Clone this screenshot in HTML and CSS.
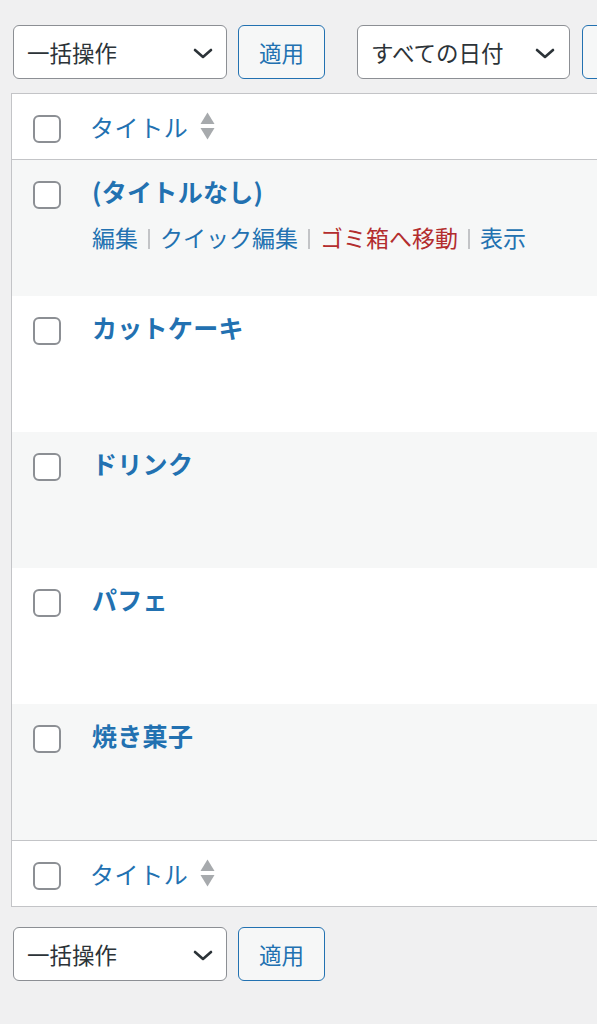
FILE: index.html
```html
<!DOCTYPE html>
<html lang="ja">
<head>
<meta charset="utf-8">
<title>投稿一覧</title>
<link rel="stylesheet" href="styles.css">
</head>
<body>
<div class="page">
  <div class="tablenav top">
    <div class="select bulk">
      <span class="select-label">一括操作</span>
      <svg class="chev" viewBox="0 0 20 11" width="20" height="11"><path d="M2 2 L10 9 L18 2" fill="none" stroke="#2c3338" stroke-width="2.6" stroke-linecap="round" stroke-linejoin="round"/></svg>
    </div>
    <button class="btn">適用</button>
    <div class="select date">
      <span class="select-label">すべての日付</span>
      <svg class="chev" viewBox="0 0 20 11" width="20" height="11"><path d="M2 2 L10 9 L18 2" fill="none" stroke="#2c3338" stroke-width="2.6" stroke-linecap="round" stroke-linejoin="round"/></svg>
    </div>
    <button class="btn narrow">絞り込み</button>
  </div>

  <div class="list">
    <div class="list-head">
      <span class="cb"></span>
      <a class="sort-label">タイトル<svg class="sort" viewBox="0 0 15 28" width="15" height="28"><path d="M7.5 0.5 L14.5 12 L0.5 12 Z" fill="#a7aaad"/><path d="M0.5 16 L14.5 16 L7.5 27.5 Z" fill="#a7aaad"/></svg></a>
    </div>

    <div class="row alt">
      <span class="cb"></span>
      <div class="cell">
        <a class="row-title">(タイトルなし)</a>
        <div class="row-actions">
          <a class="act">編集</a><span class="sep"></span><a class="act">クイック編集</a><span class="sep"></span><a class="act trash">ゴミ箱へ移動</a><span class="sep"></span><a class="act">表示</a>
        </div>
      </div>
    </div>
    <div class="row">
      <span class="cb"></span>
      <div class="cell"><a class="row-title">カットケーキ</a></div>
    </div>
    <div class="row alt">
      <span class="cb"></span>
      <div class="cell"><a class="row-title">ドリンク</a></div>
    </div>
    <div class="row">
      <span class="cb"></span>
      <div class="cell"><a class="row-title">パフェ</a></div>
    </div>
    <div class="row alt">
      <span class="cb"></span>
      <div class="cell"><a class="row-title">焼き菓子</a></div>
    </div>

    <div class="list-foot">
      <span class="cb"></span>
      <a class="sort-label">タイトル<svg class="sort" viewBox="0 0 15 28" width="15" height="28"><path d="M7.5 0.5 L14.5 12 L0.5 12 Z" fill="#a7aaad"/><path d="M0.5 16 L14.5 16 L7.5 27.5 Z" fill="#a7aaad"/></svg></a>
    </div>
  </div>

  <div class="tablenav bottom">
    <div class="select bulk">
      <span class="select-label">一括操作</span>
      <svg class="chev" viewBox="0 0 20 11" width="20" height="11"><path d="M2 2 L10 9 L18 2" fill="none" stroke="#2c3338" stroke-width="2.6" stroke-linecap="round" stroke-linejoin="round"/></svg>
    </div>
    <button class="btn">適用</button>
  </div>
</div>
</body>
</html>
```

FILE: styles.css
```css
html, body {
  margin: 0;
  padding: 0;
  background: #f0f0f1;
  overflow: hidden;
}
body {
  font-family: "Noto Sans CJK JP", "Noto Sans", sans-serif;
  color: #2c3338;
  width: 597px;
  height: 1024px;
}
.page {
  padding: 25px 0 0 11px;
  width: 700px;
}
.tablenav {
  display: flex;
  align-items: flex-start;
  padding-left: 2px;
}
.tablenav.bottom {
  margin-top: 20px;
}
.select {
  box-sizing: border-box;
  flex: none;
  height: 54px;
  background: #fff;
  border: 1.5px solid #8c8f94;
  border-radius: 6px;
  display: flex;
  align-items: center;
  justify-content: space-between;
  padding: 0 13px 0 13px;
  font-size: 22.5px;
  color: #2c3338;
}
.select.bulk { width: 214px; }
.select.date { width: 213px; margin-left: 32px; padding-right: 14px; }
.select-label { line-height: 1; white-space: nowrap; }
.chev { display: block; flex: none; margin-top: 2px; }
.btn {
  box-sizing: border-box;
  flex: none;
  width: 87px;
  height: 54px;
  margin-left: 11px;
  padding: 0;
  text-align: center;
  background: #f6f7f7;
  border: 1.5px solid #2271b1;
  border-radius: 6px;
  color: #2271b1;
  font-family: inherit;
  font-size: 22.5px;
  line-height: 1;
  white-space: nowrap;
}
.btn.narrow { width: 120px; margin-left: 12px; }

.list {
  margin-top: 14px;
  width: 640px;
  background: #fff;
  border: 1px solid #c3c4c7;
}
.cb {
  box-sizing: border-box;
  flex: none;
  width: 28px;
  height: 28px;
  border: 2px solid #8c8f94;
  border-radius: 6px;
  background: #fff;
}
.list-head, .list-foot {
  box-sizing: border-box;
  height: 66px;
  display: flex;
  align-items: flex-start;
  padding: 21px 0 0 21px;
}
.list-head { border-bottom: 1px solid #c3c4c7; }
.list-foot { border-top: 1px solid #c3c4c7; }
.sort-label {
  display: flex;
  align-items: center;
  margin-left: 29px;
  margin-top: -5px;
  height: 34px;
  font-size: 24px;
  line-height: 34px;
  color: #2271b1;
  letter-spacing: 0.6px;
}
.sort { display: block; margin-left: 12px; margin-top: -2px; }
.row {
  box-sizing: border-box;
  height: 136px;
  display: flex;
  align-items: flex-start;
  padding: 21px 0 0 21px;
}
.row.alt { background: #f6f7f7; }
.cell {
  margin-left: 31px;
  margin-top: -7px;
}
.row-title {
  display: block;
  font-size: 25px;
  line-height: 34px;
  font-weight: 700;
  color: #2271b1;
  letter-spacing: 0.3px;
}
.row-actions {
  display: flex;
  align-items: center;
  margin-top: 12px;
  height: 34px;
  font-size: 23px;
  line-height: 34px;
}
.act { color: #2271b1; white-space: nowrap; }
.act.trash { color: #b32d2e; }
.sep {
  display: inline-block;
  width: 2px;
  height: 20px;
  background: #c3c4c7;
  margin: 4px 10px 0 10px;
}
```
